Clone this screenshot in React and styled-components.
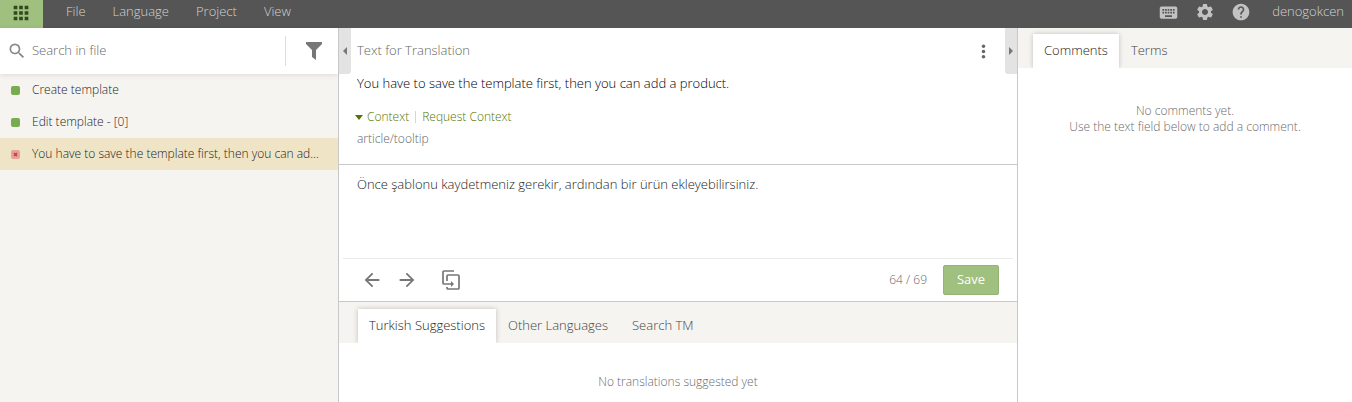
import React from 'react';
import styled, { createGlobalStyle } from 'styled-components';
import { MdApps, MdSearch, MdKeyboard, MdSettings, MdHelp, MdMoreVert, MdArrowBack, MdArrowForward } from 'react-icons/md';

const GlobalStyle = createGlobalStyle`
  * {
    box-sizing: border-box;
  }

  body {
    margin: 0;
    font-family: 'Open Sans', sans-serif;
    font-size: 13px;
    font-weight: 300;
    line-height: 18px;
    color: #1c1c1c;
    background: #fff;
  }

  button, input, textarea {
    font: inherit;
    color: inherit;
    margin: 0;
    padding: 0;
    border: 0;
    background: none;
  }

  button {
    cursor: pointer;
  }

  svg {
    display: block;
  }
`

const Page = styled.div`
  display: flex;
  flex-direction: column;
  min-height: 100vh;
`

const TopBar = styled.header`
  display: flex;
  height: 28px;
  background: #555;
  color: #d2d2d2;
`

const AppsButton = styled.button`
  display: flex;
  align-items: center;
  justify-content: center;
  width: 43px;
  padding: 0 2px 3px 0;
  background: #a0c080;
  color: #2f4a1c;
`

const Menu = styled.nav`
  display: flex;
  flex: 1;
  gap: 27px;
  padding: 0 0 6px 23px;
`

const Tools = styled.div`
  display: flex;
  align-items: center;
  gap: 16px;
  padding: 0 8px 6px 0;
`

const IconButton = styled.button`
  display: flex;
  align-items: center;
  justify-content: center;
`

const ToolButton = styled(IconButton)`
  height: 20px;
  padding-top: 2px;
  color: #c2c2c2;
`

const UserName = styled.button`
  margin-left: 5px;
`

const Workspace = styled.main`
  display: grid;
  flex: 1;
  grid-template-columns: 25% minmax(0, 1fr) 335px;
`

const Sidebar = styled.aside`
  background: #f5f4f0;
`

const SearchBar = styled.div`
  display: flex;
  align-items: center;
  height: 46px;
  padding-left: 7px;
  background: #fff;
  box-shadow: 0 1px 5px rgba(0, 0, 0, .1);
  color: #888;
`

const SearchInput = styled.input`
  flex: 1;
  min-width: 0;
  margin-left: 5px;
  padding-bottom: 2px;
  outline: 0;

  &::placeholder {
    color: #666;
    opacity: 1;
  }
`

const FilterButton = styled(IconButton)`
  width: 53px;
  height: 30px;
  padding-left: 3px;
  border-left: 1px solid #ddd;
  color: #777;
`

const StringList = styled.ul`
  margin: 0;
  padding: 0;
  list-style: none;
`

const StringRow = styled.li`
  background: ${props => props.$active ? '#efe5c6' : 'transparent'};
`

const StringButton = styled.button`
  display: flex;
  align-items: center;
  width: 100%;
  height: 32px;
  gap: 12px;
  padding: 0 14px 0 11px;
  font-size: 12px;
  text-align: left;

  span {
    overflow: hidden;
    white-space: nowrap;
    text-overflow: ellipsis;
  }
`

const Center = styled.section`
  display: flex;
  flex-direction: column;
  border-left: 1px solid #c8c8c8;
`

const CenterHeader = styled.div`
  display: flex;
  align-items: center;
  height: 46px;
`

const Toggle = styled(IconButton)`
  width: 12px;
  height: 46px;
  background: #e3e3e3;
  color: #777;
  border-radius: ${props => props.$side === 'left' ? '0 0 3px 0' : '0 0 0 3px'};
`

const Title = styled.h1`
  flex: 1;
  margin: 0 0 0 6px;
  padding-bottom: 2px;
  font-size: 13px;
  font-weight: inherit;
  line-height: 18px;
  color: #666;
`

const MoreButton = styled(IconButton)`
  margin-right: 11px;
  color: #666;
`

const Source = styled.div`
  padding: 0 18px 16px;
  border-bottom: 1px solid #c8c8c8;

  p {
    margin: 0;
  }
`

const SourceText = styled.p`
  color: #000;
`

const ContextLinks = styled.div`
  display: flex;
  align-items: center;
  margin: 16px 0 4px -2px;
  font-size: 12px;

  button {
    display: flex;
    align-items: center;
    gap: 4px;
    color: #557500;
  }
`

const Separator = styled.span`
  width: 1px;
  height: 12px;
  margin: 0 6px;
  background: #d5d5d5;
`

const ContextText = styled.p`
  font-size: 12px;
  color: #666;
`

const Translation = styled.textarea`
  display: block;
  height: 93px;
  padding: 10px 18px;
  resize: none;
  outline: 0;
`

const Actions = styled.div`
  display: flex;
  align-items: center;
  height: 43px;
  margin: 0 4px;
  padding: 0 14px 0 18px;
  border-top: 1px solid #ebebeb;
  color: #777;
`

const ActionButton = styled(IconButton)`
  width: 22px;
  height: 22px;
  margin-right: ${props => props.$last ? 'auto' : '13px'};
  margin-left: ${props => props.$last ? '9px' : '0'};
`

const Counter = styled.span`
  margin-right: 16px;
  font-size: 12px;
  color: #666;
`

const SaveButton = styled.button`
  width: 56px;
  height: 30px;
  padding-bottom: 2px;
  border: 1px solid #93b474;
  border-radius: 2px;
  background: #a0c080;
  color: #fff;
  font-weight: 400;
`

const TabBar = styled.div`
  display: flex;
  align-items: flex-end;
  height: ${props => props.$height};
  padding-left: ${props => props.$inset};
  overflow: hidden;
  background: #f5f4f0;
`

const Tab = styled.button`
  height: 34px;
  padding: 0 ${props => props.$active ? '11px' : '12px'} 2px;
  background: ${props => props.$active ? '#fff' : 'transparent'};
  box-shadow: ${props => props.$active ? '0 0 5px rgba(0, 0, 0, .22)' : 'none'};
  color: ${props => props.$active ? '#1c1c1c' : '#444'};
`

const Suggestions = styled.div`
  border-top: 1px solid #c8c8c8;
`

const Empty = styled.p`
  margin: 0;
  padding-top: ${props => props.$top};
  font-size: 12px;
  line-height: 16px;
  text-align: center;
  color: #6c6c6c;
`

const Comments = styled.aside`
  border-left: 1px solid #c8c8c8;
`

const FilterIcon = () => (
  <svg width="18" height="20" viewBox="0 0 18 20" fill="currentColor">
    <path d="M1 1h16v2l-6 6v10l-4-3V9L1 3z" />
  </svg>
)

const CopySourceIcon = () => (
  <svg width="20" height="22" viewBox="0 0 20 22" fill="none" stroke="currentColor" strokeWidth="1.7">
    <path d="M13 2H3a1 1 0 0 0-1 1v11a1 1 0 0 0 1 1h8" />
    <path d="M6 12V7a1 1 0 0 1 1-1h10a1 1 0 0 1 1 1v12a1 1 0 0 1-1 1H7a1 1 0 0 1-1-1v-1" />
    <path d="M10 12l3 3-3 3z" fill="currentColor" stroke="none" />
  </svg>
)

const Caret = ({ points, width, height }) => (
  <svg width={width} height={height} fill="currentColor">
    <polygon points={points} />
  </svg>
)

const StatusSvg = styled.svg`
  flex: none;
`

const StatusIcon = ({ translated }) => (
  <StatusSvg width="9" height="9" viewBox="0 0 9 9">
    <rect width="9" height="9" rx="2" fill={translated ? '#7aab50' : '#eaa09a'} />
    {!translated && <path d="M3 3l3 3M6 3l-3 3" stroke="#b8433c" strokeWidth="1.5" />}
  </StatusSvg>
)

const menu = ['File', 'Language', 'Project', 'View'];

const strings = [
  { text: 'Create template', translated: true },
  { text: 'Edit template - [0]', translated: true },
  { text: 'You have to save the template first, then you can add a product.', translated: false },
];

const Tabs = ({ items, height, inset, label }) => (
  <TabBar role="tablist" aria-label={label} $height={height} $inset={inset}>
    {items.map((item, i) => (
      <Tab key={item} role="tab" aria-selected={i === 0} $active={i === 0}>{item}</Tab>
    ))}
  </TabBar>
)

const App = () => {

  return (
    <Page>
      <GlobalStyle />

      <TopBar>
        <AppsButton aria-label="Apps"><MdApps size={22} /></AppsButton>
        <Menu>
          {menu.map(item => <button key={item}>{item}</button>)}
        </Menu>
        <Tools>
          <ToolButton aria-label="Keyboard shortcuts"><MdKeyboard size={21} /></ToolButton>
          <ToolButton aria-label="Settings"><MdSettings size={20} /></ToolButton>
          <ToolButton aria-label="Help"><MdHelp size={20} /></ToolButton>
          <UserName>denogokcen</UserName>
        </Tools>
      </TopBar>

      <Workspace>
        <Sidebar>
          <SearchBar>
            <MdSearch size={20} />
            <SearchInput type="text" placeholder="Search in file" aria-label="Search in file" />
            <FilterButton aria-label="Filter"><FilterIcon /></FilterButton>
          </SearchBar>
          <StringList>
            {strings.map(item => (
              <StringRow key={item.text} $active={!item.translated}>
                <StringButton>
                  <StatusIcon translated={item.translated} />
                  <span>{item.text}</span>
                </StringButton>
              </StringRow>
            ))}
          </StringList>
        </Sidebar>

        <Center>
          <CenterHeader>
            <Toggle $side="left" aria-label="Hide strings">
              <Caret width={4} height={8} points="4,0 4,8 0,4" />
            </Toggle>
            <Title>Text for Translation</Title>
            <MoreButton aria-label="More"><MdMoreVert size={21} /></MoreButton>
            <Toggle $side="right" aria-label="Hide comments">
              <Caret width={4} height={8} points="0,0 4,4 0,8" />
            </Toggle>
          </CenterHeader>

          <Source>
            <SourceText>You have to save the template first, then you can add a product.</SourceText>
            <ContextLinks>
              <button><Caret width={8} height={5} points="0,0 8,0 4,5" />Context</button>
              <Separator />
              <button>Request Context</button>
            </ContextLinks>
            <ContextText>article/tooltip</ContextText>
          </Source>

          <Translation
            aria-label="Translation"
            spellCheck={false}
            defaultValue="Önce şablonu kaydetmeniz gerekir, ardından bir ürün ekleyebilirsiniz."
          />

          <Actions>
            <ActionButton aria-label="Previous"><MdArrowBack size={22} /></ActionButton>
            <ActionButton aria-label="Next"><MdArrowForward size={22} /></ActionButton>
            <ActionButton $last aria-label="Copy source"><CopySourceIcon /></ActionButton>
            <Counter>64 / 69</Counter>
            <SaveButton>Save</SaveButton>
          </Actions>

          <Suggestions>
            <Tabs
              label="Suggestions"
              height="41px"
              inset="19px"
              items={['Turkish Suggestions', 'Other Languages', 'Search TM']}
            />
            <Empty $top="31px">No translations suggested yet</Empty>
          </Suggestions>
        </Center>

        <Comments>
          <Tabs label="Comments" height="40px" inset="15px" items={['Comments', 'Terms']} />
          <Empty $top="35px">
            No comments yet.<br />
            Use the text field below to add a comment.
          </Empty>
        </Comments>
      </Workspace>
    </Page>
  )
}

export default App;
